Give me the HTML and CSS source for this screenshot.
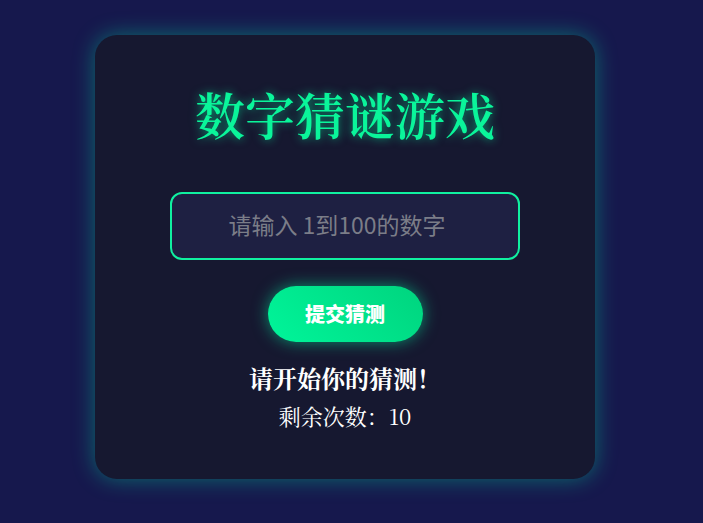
FILE: index.html
```html
<!DOCTYPE html>
<html lang="zh">
<head>
<meta charset="utf-8">
<title>数字猜谜游戏</title>
<link rel="stylesheet" href="styles.css">
</head>
<body>
<div class="card">
  <h1 class="title">数字猜谜游戏</h1>
  <input class="guess" type="text" placeholder="请输入 1到100的数字">
  <button class="submit">提交猜测</button>
  <p class="message">请开始你的猜测！</p>
  <p class="remaining">剩余次数：10</p>
</div>
</body>
</html>
```
FILE: styles.css
```css
html, body {
  margin: 0;
  height: 100%;
}
body {
  background: #16184d;
  padding: 35px 0 0 95px;
  box-sizing: border-box;
  font-family: "Noto Serif CJK SC", "Source Han Serif SC", "AR PL UMing CN", "SimSun", "Liberation Serif", serif;
}
.card {
  width: 500px;
  height: 444px;
  box-sizing: border-box;
  background: #161830;
  border-radius: 22px;
  box-shadow: 0 0 22px rgba(0, 210, 150, 0.45);
  display: flex;
  flex-direction: column;
  align-items: center;
  padding-top: 48px;
}
.title {
  margin: 0;
  color: #0af59a;
  font-size: 50px;
  font-weight: 600;
  line-height: 60px;
  text-shadow: 0 0 10px rgba(0, 245, 160, 0.6);
}
.guess {
  margin-top: 49px;
  width: 350px;
  height: 68px;
  box-sizing: border-box;
  padding: 0 18px 5px 2px;
  background: #1e2042;
  border: 2px solid #10f0a0;
  border-radius: 12px;
  text-align: center;
  font-family: "Noto Sans CJK SC", sans-serif;
  font-size: 23px;
  color: #ddd;
  outline: none;
}
.guess::placeholder {
  color: #7b7d88;
}
.submit {
  margin-top: 26px;
  width: 155px;
  height: 56px;
  border: none;
  border-radius: 28px;
  padding: 0 0 2px;
  background: linear-gradient(45deg, #00f59a, #00d47e);
  color: #fff;
  font-family: "Noto Sans CJK SC", sans-serif;
  font-weight: 900;
  font-size: 20px;
  box-shadow: 0 0 16px rgba(0, 240, 160, 0.55);
}
.message {
  margin: 20px 0 0;
  color: #fff;
  font-size: 24px;
  line-height: 32px;
  font-weight: bold;
}
.remaining {
  margin: 7px 0 0;
  color: #fff;
  font-size: 22px;
  line-height: 30px;
}
```
